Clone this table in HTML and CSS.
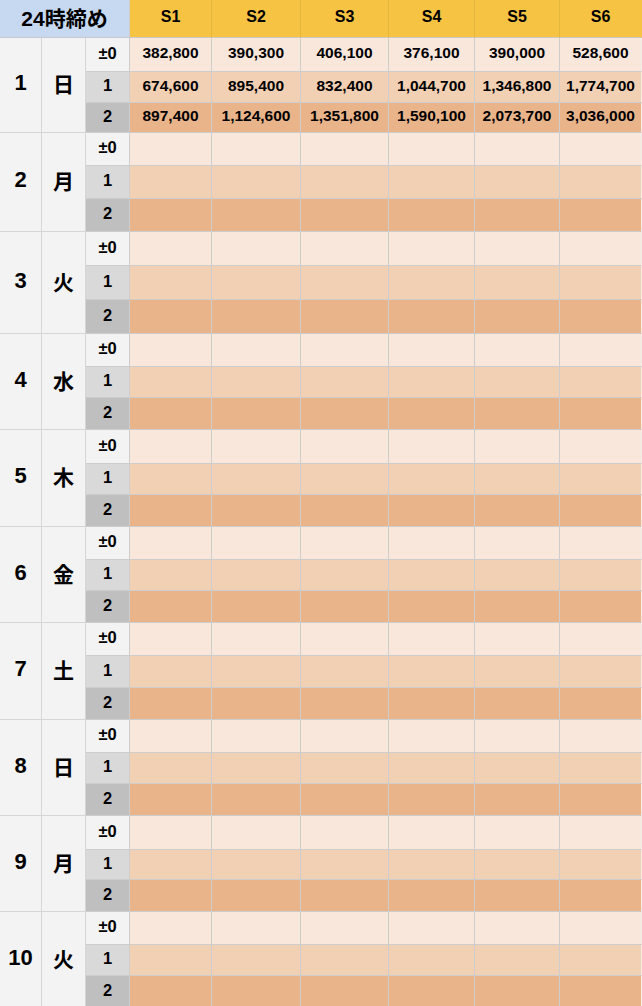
FILE: index.html
```html
<!DOCTYPE html>
<html lang="ja">
<head>
<meta charset="utf-8">
<title>24時締め</title>
<link rel="stylesheet" href="styles.css">
</head>
<body>
<div class="sheet">
  <div class="cell title">24時締め</div>
  <div class="cell sh">S1</div>
  <div class="cell sh">S2</div>
  <div class="cell sh">S3</div>
  <div class="cell sh">S4</div>
  <div class="cell sh">S5</div>
  <div class="cell sh last">S6</div>

  <div class="cell day">1</div><div class="cell dow">日</div>
  <div class="cell lab l0">±0</div>
  <div class="cell v0">382,800</div><div class="cell v0">390,300</div><div class="cell v0">406,100</div><div class="cell v0">376,100</div><div class="cell v0">390,000</div><div class="cell v0 last">528,600</div>
  <div class="cell lab l1">1</div>
  <div class="cell v1">674,600</div><div class="cell v1">895,400</div><div class="cell v1">832,400</div><div class="cell v1">1,044,700</div><div class="cell v1">1,346,800</div><div class="cell v1 last">1,774,700</div>
  <div class="cell lab l2">2</div>
  <div class="cell v2">897,400</div><div class="cell v2">1,124,600</div><div class="cell v2">1,351,800</div><div class="cell v2">1,590,100</div><div class="cell v2">2,073,700</div><div class="cell v2 last">3,036,000</div>

  <div class="cell day">2</div><div class="cell dow">月</div>
  <div class="cell lab l0">±0</div>
  <div class="cell v0"></div><div class="cell v0"></div><div class="cell v0"></div><div class="cell v0"></div><div class="cell v0"></div><div class="cell v0 last"></div>
  <div class="cell lab l1">1</div>
  <div class="cell v1"></div><div class="cell v1"></div><div class="cell v1"></div><div class="cell v1"></div><div class="cell v1"></div><div class="cell v1 last"></div>
  <div class="cell lab l2">2</div>
  <div class="cell v2"></div><div class="cell v2"></div><div class="cell v2"></div><div class="cell v2"></div><div class="cell v2"></div><div class="cell v2 last"></div>

  <div class="cell day">3</div><div class="cell dow">火</div>
  <div class="cell lab l0">±0</div>
  <div class="cell v0"></div><div class="cell v0"></div><div class="cell v0"></div><div class="cell v0"></div><div class="cell v0"></div><div class="cell v0 last"></div>
  <div class="cell lab l1">1</div>
  <div class="cell v1"></div><div class="cell v1"></div><div class="cell v1"></div><div class="cell v1"></div><div class="cell v1"></div><div class="cell v1 last"></div>
  <div class="cell lab l2">2</div>
  <div class="cell v2"></div><div class="cell v2"></div><div class="cell v2"></div><div class="cell v2"></div><div class="cell v2"></div><div class="cell v2 last"></div>

  <div class="cell day">4</div><div class="cell dow">水</div>
  <div class="cell lab l0">±0</div>
  <div class="cell v0"></div><div class="cell v0"></div><div class="cell v0"></div><div class="cell v0"></div><div class="cell v0"></div><div class="cell v0 last"></div>
  <div class="cell lab l1">1</div>
  <div class="cell v1"></div><div class="cell v1"></div><div class="cell v1"></div><div class="cell v1"></div><div class="cell v1"></div><div class="cell v1 last"></div>
  <div class="cell lab l2">2</div>
  <div class="cell v2"></div><div class="cell v2"></div><div class="cell v2"></div><div class="cell v2"></div><div class="cell v2"></div><div class="cell v2 last"></div>

  <div class="cell day">5</div><div class="cell dow">木</div>
  <div class="cell lab l0">±0</div>
  <div class="cell v0"></div><div class="cell v0"></div><div class="cell v0"></div><div class="cell v0"></div><div class="cell v0"></div><div class="cell v0 last"></div>
  <div class="cell lab l1">1</div>
  <div class="cell v1"></div><div class="cell v1"></div><div class="cell v1"></div><div class="cell v1"></div><div class="cell v1"></div><div class="cell v1 last"></div>
  <div class="cell lab l2">2</div>
  <div class="cell v2"></div><div class="cell v2"></div><div class="cell v2"></div><div class="cell v2"></div><div class="cell v2"></div><div class="cell v2 last"></div>

  <div class="cell day">6</div><div class="cell dow">金</div>
  <div class="cell lab l0">±0</div>
  <div class="cell v0"></div><div class="cell v0"></div><div class="cell v0"></div><div class="cell v0"></div><div class="cell v0"></div><div class="cell v0 last"></div>
  <div class="cell lab l1">1</div>
  <div class="cell v1"></div><div class="cell v1"></div><div class="cell v1"></div><div class="cell v1"></div><div class="cell v1"></div><div class="cell v1 last"></div>
  <div class="cell lab l2">2</div>
  <div class="cell v2"></div><div class="cell v2"></div><div class="cell v2"></div><div class="cell v2"></div><div class="cell v2"></div><div class="cell v2 last"></div>

  <div class="cell day">7</div><div class="cell dow">土</div>
  <div class="cell lab l0">±0</div>
  <div class="cell v0"></div><div class="cell v0"></div><div class="cell v0"></div><div class="cell v0"></div><div class="cell v0"></div><div class="cell v0 last"></div>
  <div class="cell lab l1">1</div>
  <div class="cell v1"></div><div class="cell v1"></div><div class="cell v1"></div><div class="cell v1"></div><div class="cell v1"></div><div class="cell v1 last"></div>
  <div class="cell lab l2">2</div>
  <div class="cell v2"></div><div class="cell v2"></div><div class="cell v2"></div><div class="cell v2"></div><div class="cell v2"></div><div class="cell v2 last"></div>

  <div class="cell day">8</div><div class="cell dow">日</div>
  <div class="cell lab l0">±0</div>
  <div class="cell v0"></div><div class="cell v0"></div><div class="cell v0"></div><div class="cell v0"></div><div class="cell v0"></div><div class="cell v0 last"></div>
  <div class="cell lab l1">1</div>
  <div class="cell v1"></div><div class="cell v1"></div><div class="cell v1"></div><div class="cell v1"></div><div class="cell v1"></div><div class="cell v1 last"></div>
  <div class="cell lab l2">2</div>
  <div class="cell v2"></div><div class="cell v2"></div><div class="cell v2"></div><div class="cell v2"></div><div class="cell v2"></div><div class="cell v2 last"></div>

  <div class="cell day">9</div><div class="cell dow">月</div>
  <div class="cell lab l0">±0</div>
  <div class="cell v0"></div><div class="cell v0"></div><div class="cell v0"></div><div class="cell v0"></div><div class="cell v0"></div><div class="cell v0 last"></div>
  <div class="cell lab l1">1</div>
  <div class="cell v1"></div><div class="cell v1"></div><div class="cell v1"></div><div class="cell v1"></div><div class="cell v1"></div><div class="cell v1 last"></div>
  <div class="cell lab l2">2</div>
  <div class="cell v2"></div><div class="cell v2"></div><div class="cell v2"></div><div class="cell v2"></div><div class="cell v2"></div><div class="cell v2 last"></div>

  <div class="cell day">10</div><div class="cell dow">火</div>
  <div class="cell lab l0">±0</div>
  <div class="cell v0"></div><div class="cell v0"></div><div class="cell v0"></div><div class="cell v0"></div><div class="cell v0"></div><div class="cell v0 last"></div>
  <div class="cell lab l1">1</div>
  <div class="cell v1"></div><div class="cell v1"></div><div class="cell v1"></div><div class="cell v1"></div><div class="cell v1"></div><div class="cell v1 last"></div>
  <div class="cell lab l2">2</div>
  <div class="cell v2"></div><div class="cell v2"></div><div class="cell v2"></div><div class="cell v2"></div><div class="cell v2"></div><div class="cell v2 last"></div>
</div>
</body>
</html>
```
FILE: styles.css
```css
html, body {
  margin: 0;
  padding: 0;
  background: #ffffff;
}

body {
  font-family: "Liberation Sans", Arial, "Noto Sans CJK JP", sans-serif;
  color: #000000;
  overflow: hidden;
}

.sheet {
  display: grid;
  width: 642px;
  grid-template-columns: 42px 44px 44px 82px 89px 88px 86px 85px 82px;
  grid-template-rows:
    38px
    34px 31px 30px
    33px 33px 33px
    34px 34px 34px
    33px 31px 32px
    34px 31px 32px
    33px 31px 32px
    33px 32px 32px
    33px 31px 32px
    34px 30px 32px
    33px 31px 32px;
}

.cell {
  box-sizing: border-box;
  display: flex;
  align-items: center;
  justify-content: center;
  border-right: 1px solid #cdcdcd;
  border-bottom: 1px solid #cdcdcd;
  font-weight: bold;
  white-space: nowrap;
  overflow: hidden;
}

.cell.last {
  border-right-color: #f4ece6;
}

.title {
  grid-column: span 3;
  background: #c6d9f0;
  font-family: "Liberation Sans", "Noto Sans CJK JP", sans-serif;
  font-size: 21px;
  padding-bottom: 4px;
  border-bottom-color: #c9c9c9;
}

.sh {
  background: #f6c343;
  font-size: 16px;
  padding-bottom: 4px;
  border-right-color: #e4b740;
  border-bottom-color: #c9c9c9;
}

.sh.last {
  border-right-color: #f6c343;
}

.day {
  grid-row: span 3;
  background: #f3f3f3;
  font-size: 22px;
  padding-bottom: 4px;
  border-color: #d6d6d6;
}

.dow {
  grid-row: span 3;
  background: #f3f3f3;
  font-family: "Noto Sans CJK JP", sans-serif;
  font-size: 21px;
  padding-bottom: 4px;
  border-color: #d6d6d6;
}

.lab {
  font-size: 16.5px;
  padding-bottom: 3px;
}

.l0 { background: #f3f3f3; }
.l1 { background: #d9d9d9; }
.l2 { background: #bfbfbf; }

.v0, .v1, .v2 {
  font-size: 15.5px;
  padding-bottom: 3px;
}

.v0 { background: #f9e7dc; }
.v1 { background: #f2d0b4; }
.v2 { background: #e9b48a; }
```
